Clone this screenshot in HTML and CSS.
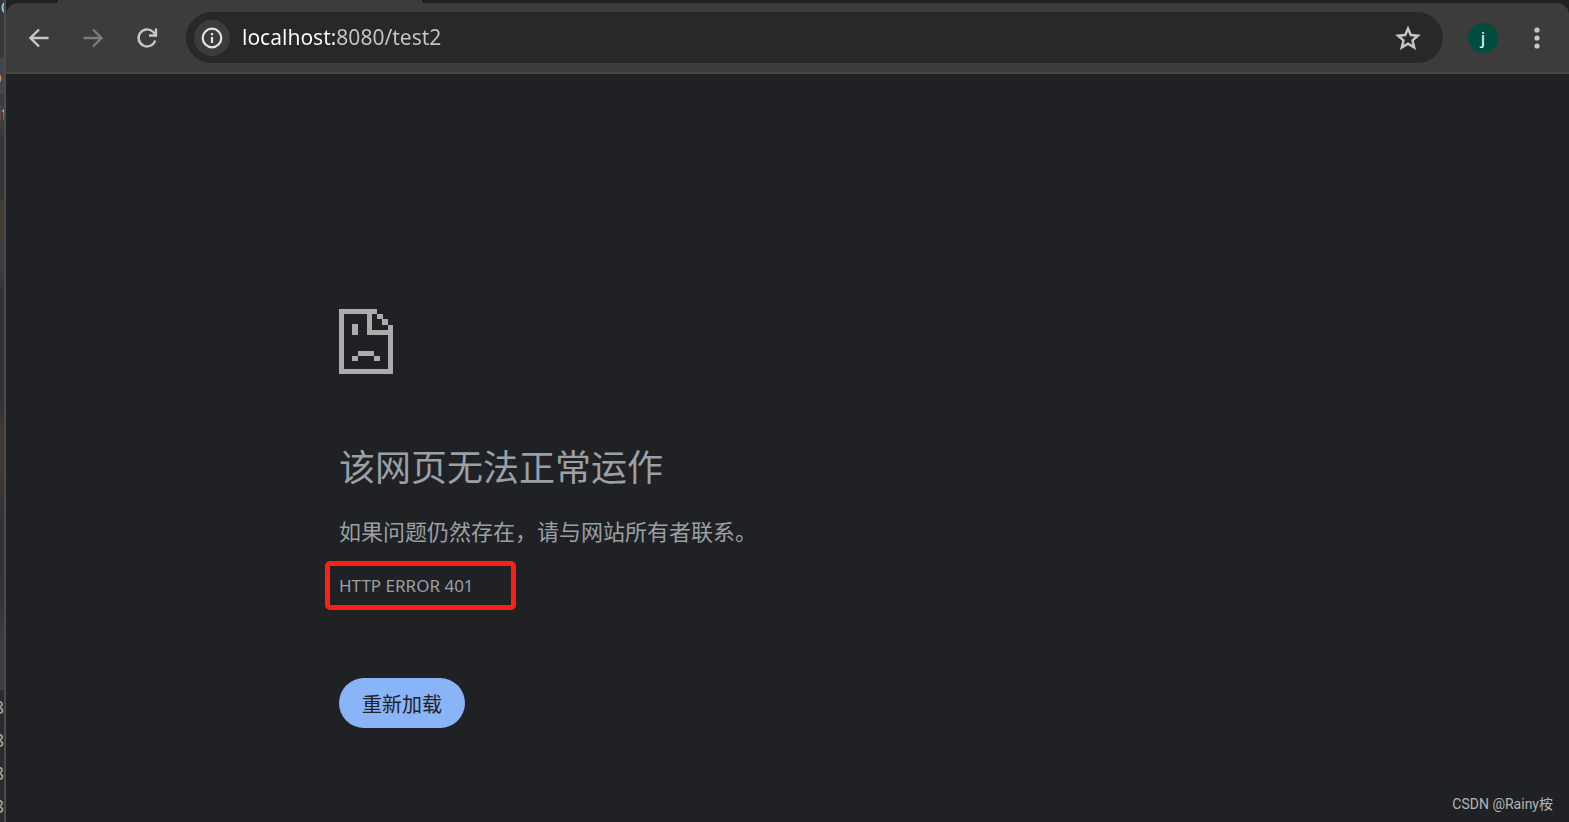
FILE: index.html
```html
<!DOCTYPE html>
<html lang="zh-CN">
<head>
  <meta charset="UTF-8">
  <title>localhost</title>
  <link rel="stylesheet" href="styles.css">
</head>
<body>
  <!-- editor window peeking out behind the browser -->
  <div class="editor">
    <span class="code c1">c</span>
    <span class="code c2">o</span>
    <span class="code c3"><b>i</b>t</span>
    <div class="lines">
      <span>8</span>
      <span>8</span>
      <span>8</span>
      <span>8</span>
    </div>
  </div>

  <div class="browser">
    <div class="tabs"><span class="tab"></span></div>
    <div class="toolbar-wrap">
      <div class="toolbar">
        <button class="nav" aria-label="Back">
          <svg width="24" height="24" viewBox="0 0 24 24"><path d="M12 3.500 3.500 12l8.500 8.500M4 12h17.500" /></svg>
        </button>
        <button class="nav" aria-label="Forward" disabled>
          <svg width="24" height="24" viewBox="0 0 24 24"><path d="M12 3.500 20.500 12 12 20.500M20 12H2.500" /></svg>
        </button>
        <button class="nav" aria-label="Reload">
          <svg width="24" height="24" viewBox="0 0 24 24"><path d="M20.200 14.500A8.500 8.500 0 1 1 18.200 6l2.300 2.300M21 2.500v7h-7" /></svg>
        </button>

        <div class="address">
          <button class="info" aria-label="Site information">
            <svg width="22" height="22" viewBox="0 0 22 22"><circle cx="11" cy="11" r="9.300" /><path d="M11 10v6M11 6v2.200" /></svg>
          </button>
          <input type="text" class="url" aria-label="Address" value="localhost:8080/test2">
          <button class="star" aria-label="Bookmark">
            <svg width="26" height="26" viewBox="0 0 26 26"><path d="M13 3.500l2.800 6.500 7.200.7-5.500 4.700 1.700 7-6.200-3.700-6.200 3.700 1.700-7L3 10.700l7.200-.7z" /></svg>
          </button>
        </div>

        <button class="avatar">j</button>
        <button class="menu" aria-label="Menu">
          <svg width="6" height="22" viewBox="0 0 6 22"><circle cx="3" cy="3" r="2.600" /><circle cx="3" cy="11" r="2.600" /><circle cx="3" cy="19" r="2.600" /></svg>
        </button>
      </div>
    </div>

    <main class="page">
      <div class="error">
        <svg class="sad" width="55" height="66" viewBox="0 0 55 66">
          <path d="M0 0h38v5H5v55h44V26H28V5h5v16h16v-5h5v49H0zM38 5h6v5h-6zM43 10h6v6h-6zM13 15h6v11h-6zM19 42h16v5H19zM13 47h6v5h-6zM35 47h6v5h-6z" />
        </svg>
        <h1>该网页无法正常运作</h1>
        <p>如果问题仍然存在，请与网站所有者联系。</p>
        <div class="error-code">HTTP ERROR 401</div>
        <button class="reload">重新加载</button>
      </div>
    </main>
  </div>

  <div class="watermark">CSDN @Rainy桉</div>
</body>
</html>
```

FILE: styles.css
```css
* {
  box-sizing: border-box;
}

body {
  margin: 0;
  min-height: 100vh;
  display: flex;
  position: relative;
  background: #202124;
  color: #9aa0a6;
  font-family: "Noto Sans", "Noto Sans CJK SC", sans-serif;
}

button {
  border: none;
  padding: 0;
  background: none;
  font-family: inherit;
  cursor: pointer;
}

svg {
  display: block;
}

/* editor strip */
.editor {
  position: relative;
  flex: none;
  width: 6px;
  overflow: hidden;
  border-right: 2px solid #4b4b4b;
  background: linear-gradient(#35373b 0 58px, #44464f 58px 94px, #3c3c3d 94px 135px, #343538 135px 201px, #463c30 201px 238px, #3e3e3e 238px 270px, #303236 290px 400px, #433733 430px 460px, #323235 520px 576px, #333 576px 600px, #3d3d3d 640px 690px, #2b2b2e 690px);
  font-size: 20px;
  line-height: 33px;
}

.code {
  position: absolute;
  right: -6px;
  color: #9fc3df;
}

.code b {
  font-weight: normal;
  color: #c99a5b;
}

.c1 {
  top: -11px;
}

.c2 {
  top: 60px;
  right: 2px;
  color: #c99a5b;
}

.c3 {
  top: 97px;
  right: -5px;
}

.lines {
  position: absolute;
  right: 0;
  top: 691px;
  font-size: 18px;
  color: #a9abad;
}

.lines span {
  display: block;
}

/* browser */
.browser {
  flex: 1;
  min-width: 0;
  display: flex;
  flex-direction: column;
}

.tabs {
  height: 3px;
  padding-left: 52px;
  background: #1f2020;
}

.tab {
  display: block;
  width: 364px;
  height: 3px;
  background: #3c3c3c;
}

.toolbar-wrap {
  background: #1f2020;
}

.toolbar {
  display: flex;
  align-items: center;
  height: 71px;
  padding: 0 29px 0 21px;
  background: #3c3c3c;
  border-bottom: 2px solid #474747;
  border-radius: 12px 12px 0 0;
}

.nav {
  margin-right: 30px;
}

.nav svg {
  fill: none;
  stroke: #c7c7c7;
  stroke-width: 2.4;
}

.nav:disabled svg {
  stroke: #7b7b7b;
}

.address {
  flex: 1;
  display: flex;
  align-items: center;
  height: 51px;
  margin: 0 25px 0 -3px;
  padding: 0 22px 0 8px;
  border-radius: 26px;
  background: #282828;
}

.info {
  display: grid;
  place-items: center;
  width: 36px;
  height: 36px;
  border-radius: 50%;
  background: #3c3c3c;
}

.info svg {
  fill: none;
  stroke: #e3e3e3;
  stroke-width: 2.2;
}

.url {
  flex: 1;
  min-width: 0;
  height: 36px;
  margin-left: 12px;
  padding: 0 0 2px;
  border: none;
  outline: none;
  /* host is brighter than port and path */
  background: linear-gradient(90deg, #fff 92px, #c7c7c7 92px);
  -webkit-background-clip: text;
  background-clip: text;
  color: transparent;
  font-family: inherit;
  font-size: 21px;
}

.star svg {
  fill: none;
  stroke: #c7c7c7;
  stroke-width: 2.4;
}

.avatar {
  width: 30px;
  height: 30px;
  margin-right: 36px;
  border-radius: 50%;
  background: #004d40;
  color: #fff;
  font-size: 17px;
  line-height: 28px;
}

.menu svg {
  fill: #c7c7c7;
}

/* error page */
.page {
  flex: 1;
  padding: 235px 0 60px;
}

.error {
  max-width: 897px;
  margin: 0 auto;
}

.sad {
  fill: #acacac;
}

h1 {
  margin: 68px 0 0;
  font-size: 36px;
  font-weight: normal;
  line-height: 50px;
}

p {
  margin: 20px 0 0;
  font-size: 22px;
  line-height: 36px;
}

.error-code {
  width: 191px;
  margin: 12px 0 68px -14px;
  padding: 0 9px;
  border: 5px solid #ff2015;
  border-radius: 5px;
  font-size: 17px;
  line-height: 39px;
}

.reload {
  height: 50px;
  padding: 0 23px;
  border-radius: 25px;
  background: #8ab4f8;
  color: #202124;
  font-size: 20px;
}

.watermark {
  position: absolute;
  right: 16px;
  bottom: 8px;
  color: #b4b4b5;
  font-family: Roboto, "Noto Sans CJK SC", sans-serif;
  font-size: 14px;
  line-height: 20px;
}
```
